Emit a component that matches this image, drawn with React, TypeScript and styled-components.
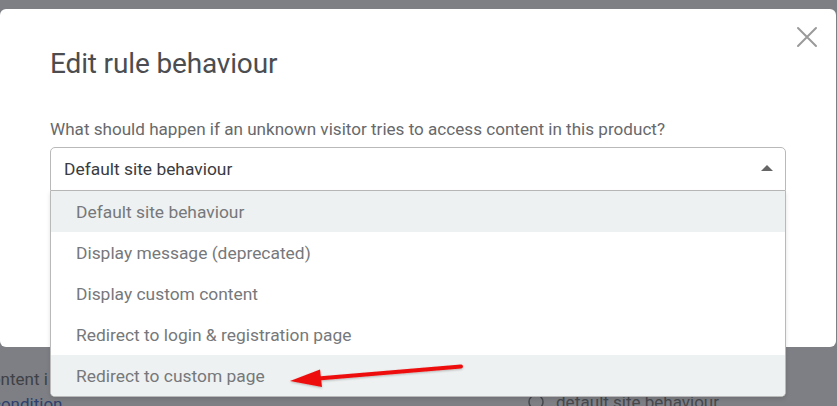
import React from "react";
import styled, { createGlobalStyle } from "styled-components";

const Global = createGlobalStyle`
  html, body { margin: 0; padding: 0; }
  body { font-family: Roboto, "Liberation Sans", Arial, sans-serif; }
`;

const Page = styled.div`
  position: relative;
  width: 837px;
  height: 406px;
  overflow: hidden;
  background: #7d7f84;
`;

const Modal = styled.div`
  position: relative;
  margin: 9px 1px 0 0;
  height: 338px;
  background: #ffffff;
  border-radius: 6px;
  padding: 0 50px;
  box-sizing: border-box;
`;

const Header = styled.div`
  display: flex;
  align-items: flex-start;
  justify-content: space-between;
  padding-top: 36px;
`;

const Title = styled.h2`
  margin: 0;
  font-size: 28px;
  line-height: 38px;
  font-weight: 400;
  color: #4b4d50;
  letter-spacing: -0.15px;
`;

const Close = styled.button`
  position: absolute;
  top: 16px;
  right: 17px;
  width: 24px;
  height: 24px;
  padding: 0;
  border: none;
  background: none;
  color: #9a9a9a;
  display: flex;
  align-items: center;
  justify-content: center;
`;

const Label = styled.div`
  margin-top: 36px;
  font-size: 17.1px;
  line-height: 20px;
  color: #67696c;
`;

const SelectWrap = styled.div`
  position: relative;
  margin-top: 8px;
`;

const SelectBox = styled.div`
  height: 44px;
  box-sizing: border-box;
  border: 1px solid #b9b9b9;
  border-radius: 5px 5px 0 0;
  display: flex;
  align-items: center;
  justify-content: space-between;
  padding: 0 12px 0 13px;
  font-size: 17.4px;
  color: #3a3c3f;
  background: #fff;
`;

const Caret = styled.span`
  width: 0;
  height: 0;
  border-left: 6px solid transparent;
  border-right: 6px solid transparent;
  border-bottom: 6px solid #666;
  margin-top: -2px;
`;

const Menu = styled.ul`
  position: absolute;
  top: 100%;
  left: 0;
  right: 0;
  margin: 0;
  padding: 0;
  list-style: none;
  background: #fff;
  border: 1px solid #b9b9b9;
  border-top: none;
  border-radius: 0 0 5px 5px;
  overflow: hidden;
  box-shadow: 0 2px 4px rgba(0, 0, 0, 0.12);
  z-index: 2;
`;

const Item = styled.li<{ $active?: boolean }>`
  height: 41px;
  display: flex;
  align-items: center;
  padding-left: 25px;
  font-size: 17.4px;
  color: #76787b;
  background: ${(p) => (p.$active ? "#eef1f1" : "#ffffff")};
`;

const Behind = styled.div`
  display: grid;
  grid-template-columns: 1fr auto;
  padding-top: 20px;
  font-size: 17px;
  line-height: 25px;
`;

const BehindText = styled.div`
  margin-left: -18px;
  width: 70px;
  white-space: nowrap;
  color: #3e4146;
`;

const BehindLink = styled.span`
  color: #2e3f6e;
  display: block;
  margin-left: 10px;
`;

const BehindNote = styled.div`
  display: flex;
  align-items: center;
  gap: 12px;
  margin: 19px 118px 0 0;
  font-size: 17px;
  line-height: 20px;
  color: #45484d;
`;

const Arrow = styled.svg`
  position: absolute;
  left: 280px;
  top: 355px;
  z-index: 3;
  pointer-events: none;
`;

const options = [
  "Default site behaviour",
  "Display message (deprecated)",
  "Display custom content",
  "Redirect to login & registration page",
  "Redirect to custom page",
];

export default function App() {
  return (
    <>
      <Global />
      <Page>
        <Modal>
          <Header>
            <Title>Edit rule behaviour</Title>
          </Header>
          <Close aria-label="Close">
            <svg width="22" height="22" viewBox="0 0 22 22">
              <path d="M2 2L20 20M20 2L2 20" stroke="currentColor" strokeWidth="2" strokeLinecap="round" />
            </svg>
          </Close>
          <Label>What should happen if an unknown visitor tries to access content in this product?</Label>
          <SelectWrap>
            <SelectBox>
              <span>Default site behaviour</span>
              <Caret />
            </SelectBox>
            <Menu>
              {options.map((o, i) => (
                <Item key={o} $active={i === 0 || i === 4}>
                  {o}
                </Item>
              ))}
            </Menu>
          </SelectWrap>
        </Modal>
        <Behind>
          <BehindText>
            content i
            <BehindLink>condition</BehindLink>
          </BehindText>
          <BehindNote>
            <svg width="16" height="16" viewBox="0 0 16 16">
              <circle cx="8" cy="8" r="7" fill="none" stroke="#45484d" strokeWidth="1.5" />
            </svg>
            default site behaviour
          </BehindNote>
        </Behind>
        <Arrow width="200" height="40" viewBox="0 0 200 40">
          <defs>
            <filter id="sh" x="-20%" y="-50%" width="140%" height="200%">
              <feDropShadow dx="0" dy="1" stdDeviation="1.2" floodColor="#000" floodOpacity="0.25" />
            </filter>
          </defs>
          <g filter="url(#sh)">
            <path d="M181 11.5L38 23.5" stroke="#ee1111" strokeWidth="4" strokeLinecap="round" />
            <path d="M10 26L40 14.5L42 32Z" fill="#ee1111" />
          </g>
        </Arrow>
      </Page>
    </>
  );
}
